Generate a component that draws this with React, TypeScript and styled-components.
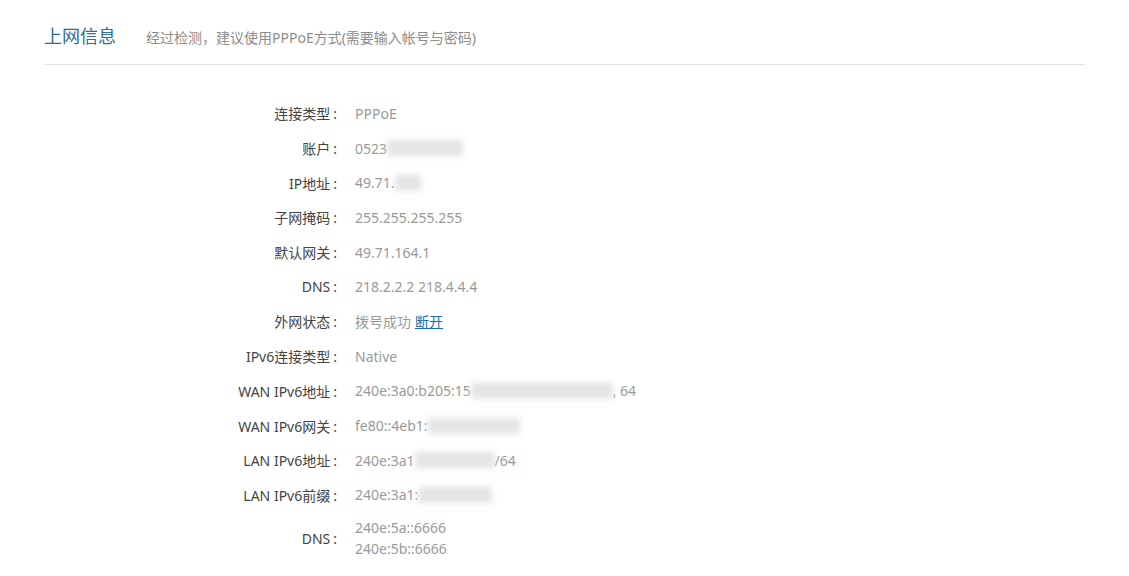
import React from "react";
import styled, { createGlobalStyle } from "styled-components";

type Part = string | { blur: number };

interface InfoRow {
    label: string;
    value: Part[][];
    link?: string;
}

const rows: InfoRow[] = [
    { label: "连接类型", value: [["PPPoE"]] },
    { label: "账户", value: [["0523", { blur: 76 }]] },
    { label: "IP地址", value: [["49.71.", { blur: 26 }]] },
    { label: "子网掩码", value: [["255.255.255.255"]] },
    { label: "默认网关", value: [["49.71.164.1"]] },
    { label: "DNS", value: [["218.2.2.2 218.4.4.4"]] },
    { label: "外网状态", value: [["拨号成功"]], link: "断开" },
    { label: "IPv6连接类型", value: [["Native"]] },
    { label: "WAN IPv6地址", value: [["240e:3a0:b205:15", { blur: 142 }, ", 64"]] },
    { label: "WAN IPv6网关", value: [["fe80::4eb1:", { blur: 92 }]] },
    { label: "LAN IPv6地址", value: [["240e:3a1", { blur: 80 }, "/64"]] },
    { label: "LAN IPv6前缀", value: [["240e:3a1:", { blur: 74 }]] },
    { label: "DNS", value: [["240e:5a::6666"], ["240e:5b::6666"]] },
];

const App: React.FC = () => {
    return (
        <>
            <GlobalStyle />
            <Page>
                <Header>
                    <Title>上网信息</Title>
                    <Hint>经过检测，建议使用PPPoE方式(需要输入帐号与密码)</Hint>
                </Header>

                <List>
                    {rows.map((row, i) => (
                        <Row key={i}>
                            <Label>
                                {row.label}
                                <Colon>:</Colon>
                            </Label>
                            <Value>
                                {row.value.map((line, j) => (
                                    <Line key={j}>
                                        {line.map((part, k) =>
                                            typeof part === "string" ? (
                                                <span key={k}>{part}</span>
                                            ) : (
                                                <Redact key={k} $w={part.blur} />
                                            )
                                        )}
                                        {row.link && <Action href="#">{row.link}</Action>}
                                    </Line>
                                ))}
                            </Value>
                        </Row>
                    ))}
                </List>
            </Page>
        </>
    );
};

const GlobalStyle = createGlobalStyle`
  body {
    margin: 0;
    background: #ffffff;
    font-family: "Noto Sans", "Noto Sans CJK SC", sans-serif;
    -webkit-font-smoothing: antialiased;
  }
`;

const Page = styled.div`
    padding: 24px 44px 0;
`;

const Header = styled.div`
    display: flex;
    align-items: baseline;
    gap: 30px;
    padding-bottom: 16px;
    border-bottom: 1px solid #e3e3e3;
`;

const Title = styled.h2`
    margin: 0;
    font-size: 18px;
    font-weight: normal;
    line-height: 24px;
    color: #2d6e92;
`;

const Hint = styled.span`
    font-size: 14px;
    color: #8c8c8c;
`;

const List = styled.div`
    padding-top: 31px;
`;

const Row = styled.div`
    display: grid;
    grid-template-columns: 293px 1fr;
    column-gap: 18px;
    align-items: center;
    min-height: 34.7px;
    padding: 5px 0;
    box-sizing: border-box;
`;

const Label = styled.div`
    text-align: right;
    font-size: 14px;
    color: #444;
`;

const Colon = styled.span`
    margin-left: 3px;
`;

const Value = styled.div`
    font-size: 14px;
    color: #999;
`;

const Line = styled.div`
    display: flex;
    align-items: center;
    line-height: 21px;
`;

const Redact = styled.span<{ $w: number }>`
    display: inline-block;
    width: ${(p) => p.$w}px;
    height: 16px;
    background: #e4e4e4;
    filter: blur(3px);
`;

const Action = styled.a`
    margin-left: 4px;
    color: #1a6ea8;
    text-decoration: underline;
`;

export default App;
